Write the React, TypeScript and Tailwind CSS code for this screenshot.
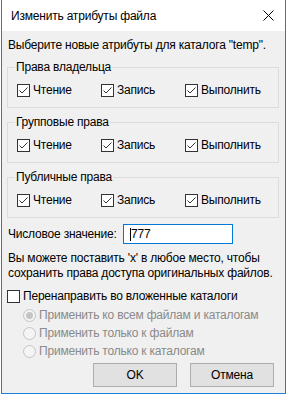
import type { ReactNode } from 'react';

const FONT = 'font-["Liberation_Sans",Arial,sans-serif] tracking-[-0.2px]';

// --- Win10-style check box ---

function CheckBox({ checked, label }: { checked: boolean; label: string }) {
  return (
    <label className="flex items-center h-4">
      <span className="w-[13px] h-[13px] border border-[#333333] bg-white flex items-center justify-center shrink-0">
        {checked && (
          <svg width="11" height="11" viewBox="0 0 11 11">
            <path d="M1.5 5.5 L4 8 L9.5 2.5" fill="none" stroke="#333333" strokeWidth="1" />
          </svg>
        )}
      </span>
      <span className="ml-[3px] whitespace-nowrap">{label}</span>
    </label>
  );
}

function Radio({ checked, label }: { checked: boolean; label: string }) {
  return (
    <label className="flex items-center h-[18px] text-[#8a8a8a]">
      <span className="w-[13px] h-[13px] rounded-full border border-[#c4c4c4] bg-[#f4f4f4] flex items-center justify-center shrink-0">
        {checked && <span className="w-[7px] h-[7px] rounded-full bg-[#c4c4c4]" />}
      </span>
      <span className="ml-[3px] whitespace-nowrap">{label}</span>
    </label>
  );
}

// --- group box with rwx row ---

function Group({ title }: { title: string }) {
  return (
    <fieldset className="ml-[-1px] w-[272px] border border-[#dcdcdc] px-[9px] pt-[7px] pb-[9px] mt-[6px] first:mt-0">
      <legend className="px-[1px] ml-[-2px] leading-4">{title}</legend>
      <div className="flex">
        <div className="w-[84px]">
          <CheckBox checked label="Чтение" />
        </div>
        <div className="w-[84px]">
          <CheckBox checked label="Запись" />
        </div>
        <div>
          <CheckBox checked label="Выполнить" />
        </div>
      </div>
    </fieldset>
  );
}

function Button({ children }: { children: ReactNode }) {
  return (
    <button className="w-[84px] h-[24px] bg-[#e1e1e1] border border-[#adadad] text-black leading-none">
      {children}
    </button>
  );
}

export default function App() {
  return (
    <div className={`w-[288px] h-[397px] bg-white overflow-hidden text-[12px] text-black ${FONT}`}>
      <div className="ml-[1px] w-[285px] h-[394px] border-x border-b border-[#1a7fd6] flex flex-col">
        {/* title bar */}
        <div className="h-[31px] bg-white flex items-center justify-between pl-[9px] pr-[11px]">
          <span>Изменить атрибуты файла</span>
          <svg width="11" height="11" viewBox="0 0 11 11">
            <path d="M0.5 0.5 L10.5 10.5 M10.5 0.5 L0.5 10.5" stroke="#000" strokeWidth="1" />
          </svg>
        </div>

        {/* body */}
        <div className="flex-1 bg-[#f0f0f0] pl-[6px] pt-[6px]">
          <div className="leading-4 h-4 mb-[5px]">Выберите новые атрибуты для каталога "temp".</div>

          <Group title="Права владельца" />
          <Group title="Групповые права" />
          <Group title="Публичные права" />

          <div className="flex items-center mt-[6px]">
            <span className="w-[115px]">Числовое значение:</span>
            <div className="w-[110px] h-[20px] bg-white border border-[#0078d7] flex items-center pl-[6px]">
              <span className="border-l border-black h-[13px]" />
              <span>777</span>
            </div>
          </div>

          <div className="mt-[7px] leading-[15px]">
            Вы можете поставить 'x' в любое место, чтобы
            <br />
            сохранить права доступа оригинальных файлов.
          </div>

          <div className="mt-[7px] ml-[-1px]">
            <CheckBox checked={false} label="Перенаправить во вложенные каталоги" />
          </div>

          <div className="pl-[15px] mt-[2px]">
            <Radio checked label="Применить ко всем файлам и каталогам" />
            <Radio checked={false} label="Применить только к файлам" />
            <Radio checked={false} label="Применить только к каталогам" />
          </div>

          <div className="flex justify-end gap-[13px] pr-[11px] mt-[3px]">
            <Button>OK</Button>
            <Button>Отмена</Button>
          </div>
        </div>
      </div>
    </div>
  );
}
